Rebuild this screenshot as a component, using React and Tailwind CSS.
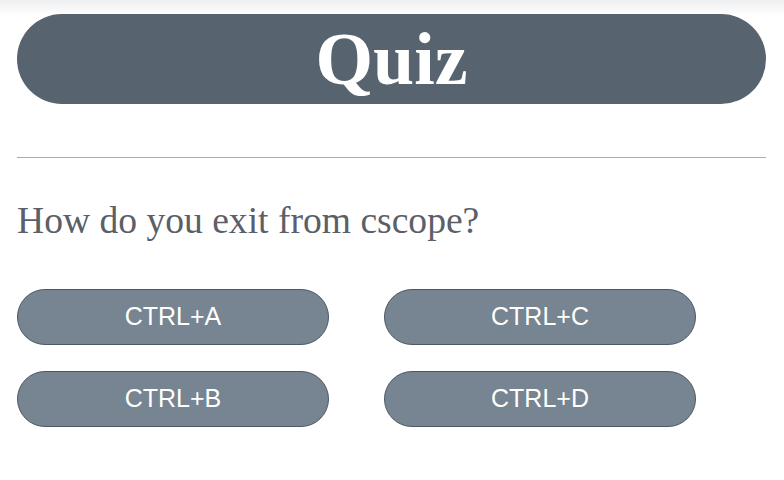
const answers = ["CTRL+A", "CTRL+C", "CTRL+B", "CTRL+D"];

function App() {
  return (
    <div className="h-[480px] w-[784px] bg-[linear-gradient(to_bottom,#eeeff0,#ffffff_16px)] px-[17px] flex flex-col">
      {/* Title bar */}
      <div className="mt-[14px] h-[90px] w-[749px] rounded-full bg-[#57636e] flex items-center justify-center">
        <h1 className="text-white font-bold text-[74px] leading-none font-['Liberation_Serif',serif]">
          Quiz
        </h1>
      </div>

      <hr className="mt-[53px] w-[749px] border-0 border-t border-[#a9abad]" />

      {/* Question */}
      <p className="mt-[44px] text-[37.6px] leading-none text-[#5b6068] font-['Liberation_Serif',serif]">
        How do you exit from cscope?
      </p>

      {/* Answers */}
      <div className="mt-[49px] grid grid-cols-[312px_312px] gap-x-[55px] gap-y-[26px]">
        {answers.map((a) => (
          <button
            key={a}
            className="h-[56px] rounded-full bg-[#778491] border border-[#4d5864] text-white text-[25px] leading-none font-['Liberation_Sans',sans-serif]"
          >
            {a}
          </button>
        ))}
      </div>
    </div>
  );
}

export default App;
